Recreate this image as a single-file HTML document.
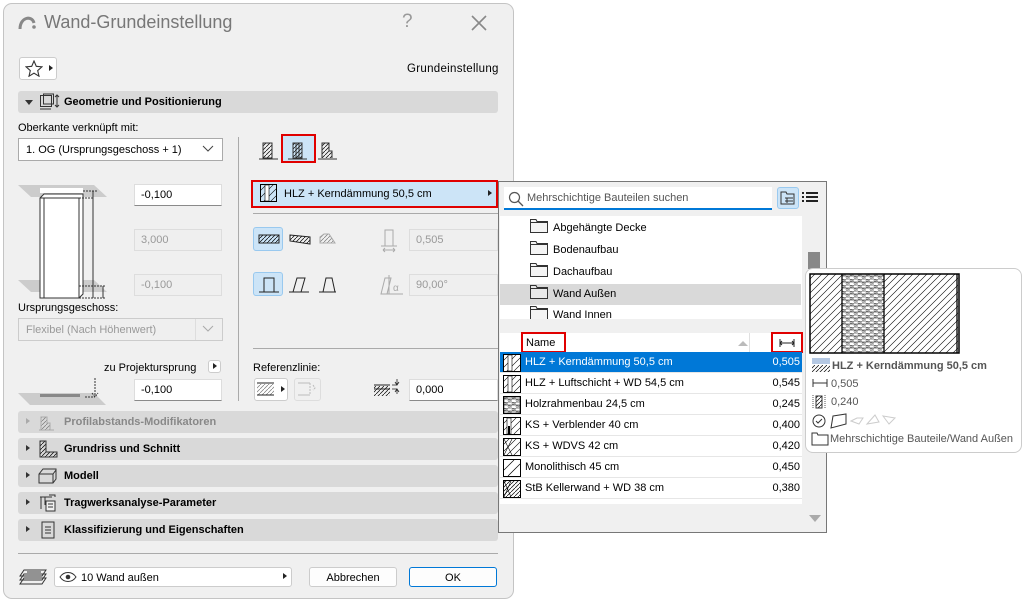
<!DOCTYPE html>
<html><head><meta charset="utf-8">
<style>
*{box-sizing:border-box;margin:0;padding:0}
body{width:1024px;height:602px;background:#fff;position:relative;overflow:hidden;font-family:"Liberation Sans",Arial,sans-serif;font-size:11px;color:#000}
.a{position:absolute}
.dlg{left:3px;top:3px;width:511px;height:596px;background:#f0f0f0;border:1px solid #c4c4c4;border-radius:9px}
.in{background:#fff;border:1px solid #ddd;border-bottom:1px solid #8a8a8a;height:22px;padding:4px 6px;font-size:11px}
.dis{background:#efefef;border:1px solid #ddd;color:#999;height:22px;padding:4px 6px}
.hdr{background:#d9d9d9;border-radius:3px;height:22px;left:18px;width:480px;font-weight:bold;font-size:11px;padding:5px 0 0 46px}
.red{border:2px solid #e00000}
.sel{background:#cce4f7;border:1px solid #99c9ef;border-radius:3px}
.row{left:500px;width:302px;height:21px;border-bottom:1px solid #e6e6e6;padding:4px 0 0 25px;font-size:11px}
.row .v{position:absolute;right:2px;top:4px}
.row svg{position:absolute;left:3px;top:2px}
.fol{left:530px;font-size:11px}
.fol svg{vertical-align:middle;margin-right:5px;position:relative;top:-2px}
</style></head><body>
<svg width="0" height="0" style="position:absolute">
<defs>
<pattern id="h" width="4" height="4" patternUnits="userSpaceOnUse"><path d="M0 4L4 0" stroke="#000" stroke-width=".7"/></pattern>
<pattern id="h8" width="7" height="7" patternUnits="userSpaceOnUse"><path d="M-1 8L8 -1M-1 1L1 -1M6 8L8 6" stroke="#000" stroke-width=".6"/></pattern>
<pattern id="br" width="8" height="6" patternUnits="userSpaceOnUse"><path d="M0 0H8M4 0V3M0 3H8M0 3V6M8 3V6" stroke="#000" stroke-width=".5" fill="none"/><circle cx="2" cy="1.5" r="1" fill="none" stroke="#000" stroke-width=".4"/><circle cx="6" cy="4.5" r="1" fill="none" stroke="#000" stroke-width=".4"/></pattern>
<pattern id="hg" width="4" height="4" patternUnits="userSpaceOnUse"><path d="M0 4L4 0" stroke="#777" stroke-width=".7"/></pattern>
</defs></svg>

<div class="a dlg"></div>
<svg class="a" style="left:17px;top:13px" width="20" height="18"><path d="M3 16 C3 4 15 2 17 10" stroke="#888" stroke-width="3" fill="none"/><circle cx="17" cy="14" r="1.8" fill="#888"/></svg>
<div class="a" style="left:44px;top:12px;font-size:18px;color:#777">Wand-Grundeinstellung</div>
<div class="a" style="left:402px;top:11px;font-size:19px;color:#999">?</div>
<svg class="a" style="left:471px;top:15px" width="16" height="16"><path d="M1 1L15 15M15 1L1 15" stroke="#888" stroke-width="1.6"/></svg>
<div class="a" style="left:19px;top:57px;width:38px;height:23px;background:#fff;border:1px solid #ccc;border-radius:3px"></div>
<svg class="a" style="left:25px;top:60px" width="18" height="17"><path d="M9 1L11.3 6.3L17 6.8L12.7 10.6L14 16.2L9 13.2L4 16.2L5.3 10.6L1 6.8L6.7 6.3Z" fill="none" stroke="#333" stroke-width="1.1"/></svg>
<div class="a" style="left:49px;top:65px;border-left:4px solid #222;border-top:3.5px solid transparent;border-bottom:3.5px solid transparent"></div>
<div class="a" style="left:407px;top:63px;font-size:11.5px;letter-spacing:.3px">Grundeinstellung</div>
<div class="a hdr" style="top:91px">Geometrie und Positionierung</div>
<div class="a" style="left:25px;top:100px;border-top:5px solid #333;border-left:4px solid transparent;border-right:4px solid transparent"></div>
<svg class="a" style="left:38px;top:93px" width="22" height="18"><rect x="2.5" y="2.5" width="11" height="11" fill="none" stroke="#333"/><rect x="5.5" y="1" width="10" height="10" fill="none" stroke="#333"/><path d="M2 16H13M19 2V14M17 4L19 2L21 4M17 12L19 14L21 12" stroke="#333" fill="none"/></svg>
<div class="a" style="left:18px;top:122px">Oberkante verknüpft mit:</div>
<div class="a" style="left:18px;top:138px;width:205px;height:23px;background:#fff;border:1px solid #aaa;padding:5px 7px">1. OG (Ursprungsgeschoss + 1)</div>
<svg class="a" style="left:202px;top:145px" width="12" height="8"><path d="M1 1L6 6L11 1" stroke="#444" fill="none"/></svg>
<div class="a" style="left:238px;top:137px;width:1px;height:264px;background:#aaa"></div>
<svg class="a" style="left:15px;top:182px" width="95" height="120">
<path d="M3 3H79L92 15H16Z" fill="#ccc"/><rect x="25" y="6" width="43" height="5" fill="#fff"/>
<path d="M3 98H79L92 110H16Z" fill="#ccc"/>
<path d="M25 16L29 12H68V112L64 116H25Z" fill="#fff" stroke="#333"/><path d="M29 16V116M25 16H64V116" stroke="#333" fill="none"/>
<path d="M64 16H78M68 9H82M64 104H90M64 116H90" stroke="#333" stroke-dasharray="2 1"/>
<path d="M78 9V116M88 104V116" stroke="#333"/>
</svg>
<div class="a in" style="left:134px;top:184px;width:88px">-0,100</div>
<div class="a dis" style="left:134px;top:229px;width:88px">3,000</div>
<div class="a dis" style="left:134px;top:274px;width:88px">-0,100</div>
<div class="a" style="left:18px;top:302px">Ursprungsgeschoss:</div>
<div class="a" style="left:18px;top:318px;width:205px;height:23px;background:#efefef;border:1px solid #ccc;padding:5px 7px;color:#999">Flexibel (Nach Höhenwert)</div>
<div class="a" style="left:195px;top:319px;width:1px;height:21px;background:#ddd"></div>
<svg class="a" style="left:202px;top:325px" width="12" height="8"><path d="M1 1L6 6L11 1" stroke="#aaa" fill="none"/></svg>
<div class="a" style="left:104px;top:362px">zu Projektursprung</div>
<div class="a" style="left:208px;top:360px;width:13px;height:13px;background:#fff;border:1px solid #ccc;border-radius:3px"></div>
<div class="a" style="left:213px;top:363px;border-left:4px solid #222;border-top:3.5px solid transparent;border-bottom:3.5px solid transparent"></div>
<svg class="a" style="left:16px;top:375px" width="92" height="30"><path d="M2 18H78L90 30H14Z" fill="#ccc"/><rect x="24" y="19" width="40" height="3" fill="#888"/><path d="M79 3V21M76 18L79 22L82 18M69 22H79" stroke="#333" stroke-dasharray="2 1" fill="none"/></svg>
<div class="a in" style="left:134px;top:379px;width:88px">-0,100</div>
<svg class="a" style="left:258px;top:139px" width="22" height="22"><rect x="5" y="4" width="9" height="15" fill="url(#h)" stroke="#333"/><path d="M1 20H20" stroke="#333"/></svg>
<div class="a red" style="left:281px;top:134px;width:35px;height:29px;background:#cce4f7"></div>
<svg class="a" style="left:287px;top:139px" width="22" height="22"><rect x="6" y="4" width="9" height="15" fill="url(#h)" stroke="#333"/><path d="M9 4V19M12 4V19M1 20H20" stroke="#333"/></svg>
<svg class="a" style="left:317px;top:139px" width="22" height="22"><path d="M5 19V4H12V12H15V19" fill="url(#h)" stroke="#333"/><path d="M1 20H20" stroke="#333"/></svg>
<div class="a red" style="left:251px;top:180px;width:247px;height:28px;background:#cce4f7"></div>
<svg class="a" style="left:260px;top:184px" width="18" height="19"><rect x=".5" y=".5" width="16" height="17" fill="url(#h8)" stroke="#000"/><rect x="5" y="1" width="4" height="16" fill="#fff" stroke="#000" stroke-width=".6"/></svg>
<div class="a" style="left:284px;top:188px">HLZ + Kerndämmung 50,5 cm</div>
<div class="a" style="left:488px;top:190px;border-left:4px solid #222;border-top:3.5px solid transparent;border-bottom:3.5px solid transparent"></div>
<div class="a" style="left:253px;top:213px;width:245px;height:1px;background:#aaa"></div>
<div class="a sel" style="left:253px;top:227px;width:30px;height:24px"></div>
<svg class="a" style="left:256px;top:230px" width="80" height="18"><rect x="3" y="5" width="20" height="8" fill="url(#h)" stroke="#222"/><path d="M34 5L54 7V14L34 11Z" fill="url(#h)" stroke="#222"/><path d="M64 13V7L68 4H73L79 13Z" fill="url(#hg)" stroke="#aaa"/></svg>
<svg class="a" style="left:379px;top:229px" width="20" height="24"><path d="M6 1H14V17H6ZM2 17H18M4 21H16M4 21L6 19M4 21L6 23M16 21L14 19M16 21L14 23" stroke="#aaa" fill="none"/></svg>
<div class="a dis" style="left:409px;top:229px;width:89px">0,505</div>
<div class="a sel" style="left:253px;top:272px;width:30px;height:24px"></div>
<svg class="a" style="left:256px;top:274px" width="80" height="20"><path d="M3 18H23M8 18V4H18V18" stroke="#222" fill="none"/><path d="M33 18H53M37 18L41 4H49L45 18" stroke="#222" fill="none"/><path d="M63 18H83M67 18L70 4H76L79 18" stroke="#222" fill="none"/></svg>
<svg class="a" style="left:378px;top:274px" width="26" height="22"><path d="M3 20L7 4H13L9 20ZM11 1V20M8 20H25" stroke="#aaa" fill="none"/><text x="15" y="17" font-size="10" fill="#aaa" font-family="Liberation Sans">α</text></svg>
<div class="a dis" style="left:409px;top:274px;width:89px">90,00°</div>
<div class="a" style="left:253px;top:348px;width:245px;height:1px;background:#aaa"></div>
<div class="a" style="left:253px;top:362px">Referenzlinie:</div>
<div class="a" style="left:254px;top:378px;width:34px;height:23px;background:#fff;border:1px solid #ccc;border-radius:3px"></div>
<svg class="a" style="left:256px;top:381px" width="20" height="16"><rect x="1" y="3" width="17" height="11" fill="url(#hg)"/><path d="M1 2H18M1 14H18" stroke="#222"/></svg>
<div class="a" style="left:281px;top:386px;border-left:4px solid #222;border-top:3.5px solid transparent;border-bottom:3.5px solid transparent"></div>
<div class="a" style="left:294px;top:378px;width:27px;height:23px;border:1px solid #ddd;border-radius:3px"></div>
<svg class="a" style="left:296px;top:381px" width="22" height="16"><path d="M2 2H14M2 14H14" stroke="#bbb"/><path d="M14 2V14M17 4L19 7L17 9" stroke="#bbb" fill="none" stroke-dasharray="2 1"/></svg>
<svg class="a" style="left:372px;top:378px" width="30" height="22"><rect x="2" y="8" width="16" height="10" fill="url(#h)"/><path d="M2 7H18M2 11H18" stroke="#222"/><path d="M20 7H25M25 1V7M23 4L25 7L27 4M20 11H25M25 11V16M23 14L25 11L27 14" stroke="#222" fill="none" stroke-width=".8"/></svg>
<div class="a in" style="left:409px;top:379px;width:89px">0,000</div>
<div class="a hdr" style="top:411px;color:#888">Profilabstands-Modifikatoren</div>
<div class="a" style="left:26px;top:418px;border-left:4px solid #aaa;border-top:3.5px solid transparent;border-bottom:3.5px solid transparent"></div>
<svg class="a" style="left:38px;top:413px" width="18" height="18"><path d="M3 17V4H9V10H12V17M1 17H16" stroke="#aaa" fill="url(#hg)"/></svg>
<div class="a hdr" style="top:438px">Grundriss und Schnitt</div>
<div class="a" style="left:26px;top:445px;border-left:4px solid #333;border-top:3.5px solid transparent;border-bottom:3.5px solid transparent"></div>
<svg class="a" style="left:38px;top:440px" width="20" height="18"><path d="M2 1V17H19V12H8V1Z" fill="url(#h)" stroke="#333"/></svg>
<div class="a hdr" style="top:465px">Modell</div>
<div class="a" style="left:26px;top:472px;border-left:4px solid #333;border-top:3.5px solid transparent;border-bottom:3.5px solid transparent"></div>
<svg class="a" style="left:38px;top:466px" width="20" height="18"><path d="M1 8L5 3H18V13L15 17H1ZM1 8H15V17M15 8L18 4" stroke="#333" fill="none"/></svg>
<div class="a hdr" style="top:492px">Tragwerksanalyse-Parameter</div>
<div class="a" style="left:26px;top:499px;border-left:4px solid #333;border-top:3.5px solid transparent;border-bottom:3.5px solid transparent"></div>
<svg class="a" style="left:38px;top:493px" width="20" height="20"><path d="M2 4H14M3 4V16M7 4V12M11 2L17 2V4" stroke="#333" fill="none"/><rect x="8" y="8" width="9" height="10" fill="#f0f0f0" stroke="#333"/><path d="M10 11H15M10 14H15" stroke="#333"/></svg>
<div class="a hdr" style="top:519px">Klassifizierung und Eigenschaften</div>
<div class="a" style="left:26px;top:526px;border-left:4px solid #333;border-top:3.5px solid transparent;border-bottom:3.5px solid transparent"></div>
<svg class="a" style="left:41px;top:521px" width="14" height="18"><rect x="1" y="1" width="12" height="16" fill="none" stroke="#333"/><path d="M4 6H10M4 9H10M4 12H10" stroke="#333"/></svg>
<div class="a" style="left:18px;top:553px;width:480px;height:1px;background:#aaa"></div>
<svg class="a" style="left:19px;top:568px" width="30" height="18"><path d="M5 2H27L23 8H1Z M5 6H27L23 12H1Z M5 10H27L23 16H1Z" fill="#f0f0f0" stroke="#333"/><path d="M8 4H22" stroke="#333"/></svg>
<div class="a" style="left:54px;top:567px;width:238px;height:20px;background:#fff;border:1px solid #ccc;border-radius:3px;padding:4px 0 0 26px">10 Wand außen</div>
<svg class="a" style="left:59px;top:571px" width="18" height="12"><path d="M1 6C5 0 13 0 17 6C13 12 5 12 1 6Z" fill="none" stroke="#333"/><circle cx="9" cy="6" r="2.3" fill="#333"/></svg>
<div class="a" style="left:283px;top:573px;border-left:4px solid #222;border-top:3.5px solid transparent;border-bottom:3.5px solid transparent"></div>
<div class="a" style="left:309px;top:567px;width:88px;height:20px;background:#fdfdfd;border:1px solid #ccc;border-radius:3px;text-align:center;padding-top:4px">Abbrechen</div>
<div class="a" style="left:409px;top:567px;width:88px;height:20px;background:#fdfdfd;border:1px solid #0078d7;border-radius:3px;text-align:center;padding-top:4px">OK</div>

<div class="a" style="left:498px;top:181px;width:329px;height:352px;background:#f0f0f0;border:1px solid #777"></div>
<div class="a" style="left:504px;top:187px;width:268px;height:23px;background:#fff;border-bottom:2px solid #0078d7"></div>
<svg class="a" style="left:508px;top:191px" width="16" height="16"><circle cx="6.5" cy="6.5" r="5" fill="none" stroke="#555" stroke-width="1.2"/><path d="M10 10L15 15" stroke="#555" stroke-width="1.3"/></svg>
<div class="a" style="left:527px;top:192px;font-size:11px;color:#555">Mehrschichtige Bauteilen suchen</div>
<div class="a" style="left:777px;top:187px;width:22px;height:22px;background:#cce4f7;border:1px solid #99c9ef;border-radius:3px"></div>
<svg class="a" style="left:779px;top:189px" width="18" height="18"><path d="M2 3H7L8 5H15V15H2Z" fill="none" stroke="#333"/><path d="M6 9H14M6 12H14M8 9V14" stroke="#333"/></svg>
<svg class="a" style="left:801px;top:191px" width="18" height="14"><path d="M1 2H3M5 2H17M1 6H3M5 6H17M1 10H3M5 10H17" stroke="#222" stroke-width="2"/></svg>
<div class="a" style="left:500px;top:216px;width:302px;height:103px;background:#fff"></div>
<div class="a" style="left:500px;top:284px;width:301px;height:21px;background:#d9d9d9"></div>
<div class="a fol" style="top:221px"><svg width="18" height="14"><path d="M.5 13.5V.5H6L7 2.5H17.5V13.5Z M.5 3.5H17.5" fill="#f4f4f4" stroke="#333"/></svg>Abgehängte Decke</div>
<div class="a fol" style="top:243px"><svg width="18" height="14"><path d="M.5 13.5V.5H6L7 2.5H17.5V13.5Z M.5 3.5H17.5" fill="#f4f4f4" stroke="#333"/></svg>Bodenaufbau</div>
<div class="a fol" style="top:265px"><svg width="18" height="14"><path d="M.5 13.5V.5H6L7 2.5H17.5V13.5Z M.5 3.5H17.5" fill="#f4f4f4" stroke="#333"/></svg>Dachaufbau</div>
<div class="a fol" style="top:287px"><svg width="18" height="14"><path d="M.5 13.5V.5H6L7 2.5H17.5V13.5Z M.5 3.5H17.5" fill="#e8e8e8" stroke="#333"/></svg>Wand Außen</div>
<div class="a" style="left:500px;top:305px;width:302px;height:14px;overflow:hidden"><div class="a fol" style="left:30px;top:3px"><svg width="18" height="14"><path d="M.5 13.5V.5H6L7 2.5H17.5V13.5Z M.5 3.5H17.5" fill="#f4f4f4" stroke="#333"/></svg>Wand Innen</div></div>
<div class="a" style="left:808px;top:252px;width:12px;height:17px;background:#888"></div>
<div class="a" style="left:500px;top:333px;width:302px;height:19px;background:#fff"></div>
<div class="a" style="left:749px;top:333px;width:1px;height:19px;background:#e0e0e0"></div>
<div class="a red" style="left:521px;top:332px;width:45px;height:21px"></div>
<div class="a" style="left:526px;top:337px">Name</div>
<div class="a" style="left:738px;top:341px;border-bottom:5px solid #bbb;border-left:5px solid transparent;border-right:5px solid transparent"></div>
<div class="a red" style="left:771px;top:332px;width:32px;height:21px"></div>
<svg class="a" style="left:779px;top:338px" width="16" height="10"><path d="M1 1V9M15 1V9M1 5H15M3 3L1 5L3 7M13 3L15 5L13 7" stroke="#222" fill="none"/></svg>
<div class="a" style="left:500px;top:352px;width:302px;height:152px;background:#fff"></div>
<div class="a row" style="top:352px;background:#0078d7;color:#fff"><svg width="18" height="18"><rect x=".5" y=".5" width="17" height="17" fill="#fff" stroke="#000"/><rect x="1" y="1" width="16" height="16" fill="url(#h8)"/><rect x="5" y="1" width="4" height="16" fill="#fff" stroke="#000" stroke-width=".6"/></svg>HLZ + Kerndämmung 50,5 cm<span class="v">0,505</span></div>
<div class="a row" style="top:373px"><svg width="18" height="18"><rect x=".5" y=".5" width="17" height="17" fill="url(#h8)" stroke="#000"/><rect x="5" y="1" width="4" height="16" fill="#fff" stroke="#000" stroke-width=".6"/></svg>HLZ + Luftschicht + WD 54,5 cm<span class="v">0,545</span></div>
<div class="a row" style="top:394px"><svg width="18" height="18"><rect x=".5" y=".5" width="17" height="17" fill="url(#br)" stroke="#000" stroke-width="1.5"/></svg>Holzrahmenbau 24,5 cm<span class="v">0,245</span></div>
<div class="a row" style="top:415px"><svg width="18" height="18"><rect x=".5" y=".5" width="17" height="17" fill="url(#h8)" stroke="#000"/><rect x="4" y="1" width="4" height="16" fill="#fff" stroke="#000" stroke-width=".6"/><path d="M6 9V17" stroke="#000" stroke-width="2"/></svg>KS + Verblender 40 cm<span class="v">0,400</span></div>
<div class="a row" style="top:436px"><svg width="18" height="18"><rect x=".5" y=".5" width="17" height="17" fill="url(#h8)" stroke="#000"/><path d="M1 1L9 17M9 1L1 17" stroke="#000" stroke-width=".6"/></svg>KS + WDVS 42 cm<span class="v">0,420</span></div>
<div class="a row" style="top:457px"><svg width="18" height="18"><rect x=".5" y=".5" width="17" height="17" fill="#fff" stroke="#000"/><path d="M1 11L11 1M5 17L17 5" stroke="#000" stroke-width=".7"/></svg>Monolithisch 45 cm<span class="v">0,450</span></div>
<div class="a row" style="top:478px"><svg width="18" height="18"><rect x=".5" y=".5" width="17" height="17" fill="url(#h)" stroke="#000"/><path d="M1 1L8 17M8 1L1 17" stroke="#000" stroke-width=".6"/></svg>StB Kellerwand + WD 38 cm<span class="v">0,380</span></div>
<div class="a" style="left:809px;top:515px;border-top:7px solid #aaa;border-left:6px solid transparent;border-right:6px solid transparent"></div>

<div class="a" style="left:805px;top:268px;width:217px;height:185px;background:#fff;border:1px solid #ccc;border-radius:8px"></div>
<svg class="a" style="left:809px;top:273px" width="152" height="82">
<rect x="1" y="1" width="32" height="79" fill="url(#h8)"/>
<rect x="33" y="1" width="42" height="79" fill="url(#br)"/>
<rect x="75" y="1" width="74" height="79" fill="url(#h8)"/>
<rect x="1" y="1" width="149" height="79" fill="none" stroke="#000" stroke-width="1.5"/>
<path d="M33 1V80M75 1V80M148 1V80" stroke="#000" stroke-width="1.3"/>
</svg>
<svg class="a" style="left:811px;top:357px" width="20" height="16"><path d="M1 2H19M1 4H19M1 6H19" stroke="#3a6fb5" stroke-width=".8"/><path d="M1 8H19V15H1Z" fill="url(#h)"/></svg>
<div class="a" style="left:832px;top:360px;font-weight:bold;color:#555">HLZ + Kerndämmung 50,5 cm</div>
<svg class="a" style="left:812px;top:378px" width="16" height="10"><path d="M1 1V9M15 1V9M1 5H15" stroke="#333"/></svg>
<div class="a" style="left:831px;top:378px;color:#555">0,505</div>
<svg class="a" style="left:812px;top:394px" width="14" height="16"><path d="M1 1V15M13 1V15" stroke="#555" stroke-dasharray="1 1"/><rect x="4" y="2" width="6" height="12" fill="url(#h)" stroke="#333"/></svg>
<div class="a" style="left:831px;top:396px;color:#555">0,240</div>
<svg class="a" style="left:811px;top:412px" width="100" height="18"><circle cx="8" cy="9" r="6" fill="none" stroke="#333"/><path d="M5 9L7 11L11 7" stroke="#333" fill="none"/><path d="M22 4L35 2V12L20 16Z" fill="none" stroke="#333"/><path d="M40 9L46 6H52L48 12Z M56 12L64 3L68 10Z M72 4L84 6L78 12Z" fill="none" stroke="#ccc"/></svg>
<svg class="a" style="left:811px;top:431px" width="18" height="15"><path d="M1 2H6L7 4H17V14H1Z" fill="none" stroke="#333"/></svg>
<div class="a" style="left:830px;top:433px;color:#555">Mehrschichtige Bauteile/Wand Außen</div>
</body></html>
